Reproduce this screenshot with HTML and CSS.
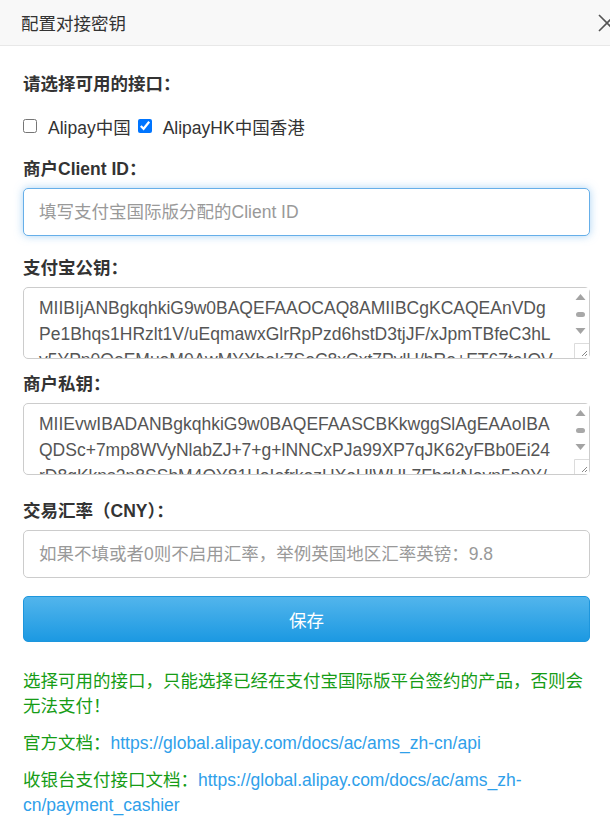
FILE: index.html
```html
<!DOCTYPE html>
<html lang="zh-CN">
<head>
  <meta charset="UTF-8">
  <title>配置对接密钥</title>
  <link rel="stylesheet" href="styles.css">
</head>
<body>

<div class="modal-header">
  <span class="modal-title">配置对接密钥</span>
  <button class="close-btn" aria-label="关闭">
    <svg width="18" height="18" viewBox="0 0 18 18"><path d="M1 1L17 17M17 1L1 17" stroke="#555" stroke-width="1.6" fill="none"/></svg>
  </button>
</div>

<div class="modal-body">
  <div class="group">
    <div class="label">请选择可用的接口：</div>
    <div class="check-row">
      <label class="check"><input type="checkbox">Alipay中国</label>
      <label class="check"><input type="checkbox" checked>AlipayHK中国香港</label>
    </div>
  </div>

  <div class="group">
    <div class="label">商户Client ID：</div>
    <input class="field focus" type="text" placeholder="填写支付宝国际版分配的Client ID">
  </div>

  <div class="group">
    <div class="label">支付宝公钥：</div>
    <div class="area-wrap">
      <textarea class="field area">MIIBIjANBgkqhkiG9w0BAQEFAAOCAQ8AMIIBCgKCAQEAnVDg
Pe1Bhqs1HRzlt1V/uEqmawxGlrRpPzd6hstD3tjJF/xJpmTBfeC3hL
v5YPn0QoEMuoM0AwMYXbek7SoC8xCxt7PvlH/hRo+ET67taIOV
k2Ws9rQ1pLmN4yTz8Fa3dHj6Ucb0XqVeR5gKoPi7sWnB2lAt
Yh9CmE4rZx1GvQ8uJd3NfTo6Kw5bMsLp0aRyH2iXe7gUcD4q
nV1jFz8tSk3OaW6mBq9PhY2xLr5CeGdT0uIv7oN4sEa1KbQw
3ZfRpX8yMcJ2UhD6tLg9VnAo5eWq1sBk4HiT7rYjCxP0mNdI
QIDAQAB</textarea>
      <div class="scrollbar">
        <svg class="arrow" width="17" height="18" viewBox="0 0 17 18"><path d="M3.5 12h10L8.5 6z" fill="#a3a3a3"/></svg>
        <div class="track"><span class="thumb"></span></div>
        <svg class="arrow" width="17" height="18" viewBox="0 0 17 18"><path d="M3.5 6h10L8.5 12z" fill="#a3a3a3"/></svg>
      </div>
    </div>
  </div>

  <div class="group">
    <div class="label">商户私钥：</div>
    <div class="area-wrap">
      <textarea class="field area">MIIEvwIBADANBgkqhkiG9w0BAQEFAASCBKkwggSlAgEAAoIBA
QDSc+7mp8WVyNlabZJ+7+g+lNNCxPJa99XP7qJK62yFBb0Ei24
rD8gKkns2n8SShM4QY81UoIofrkezHXeUlWUL7FbgkNevn5p0Y/
a3Lq7Vt0HcWm9Xe2Ko5sNbRj8Pz1GyTf4UiDwAh6ElMq3CnS
x7BrJ0vKt2OaYd5ZpQ9hWfL1mEsI8gNcT4uRyV6bXo3jDkA2
Gq5Ue8sHn1tFw0RmKz7vY4bLc9PiJ2oXa6dEhT3gMrNyS1Wk
u0CfZ8lQpV5eOxB2Ij7DtmR4sKn9YaHw1gU6cXo3vLbE0rNz
t5WnY0rQa4GzLx7PeB1sVm9KhI3uDcJ2oFy6Tg8NwEl0qRbA</textarea>
      <div class="scrollbar">
        <svg class="arrow" width="17" height="18" viewBox="0 0 17 18"><path d="M3.5 12h10L8.5 6z" fill="#a3a3a3"/></svg>
        <div class="track"><span class="thumb"></span></div>
        <svg class="arrow" width="17" height="18" viewBox="0 0 17 18"><path d="M3.5 6h10L8.5 12z" fill="#a3a3a3"/></svg>
      </div>
    </div>
  </div>

  <div class="group rate">
    <div class="label">交易汇率（CNY）：</div>
    <input class="field" type="text" placeholder="如果不填或者0则不启用汇率，举例英国地区汇率英镑：9.8">
  </div>

  <button class="save-btn">保存</button>

  <div class="notes">
    <p class="tip">选择可用的接口，只能选择已经在支付宝国际版平台签约的产品，否则会无法支付！</p>
    <p class="tip">官方文档：<a href="#">https://global.alipay.com/docs/ac/ams_zh-cn/api</a></p>
    <p class="tip">收银台支付接口文档：<a href="#">https://global.alipay.com/docs/ac/ams_zh-cn/payment_cashier</a></p>
  </div>
</div>

</body>
</html>
```

FILE: styles.css
```css
* {
  box-sizing: border-box;
}

body {
  margin: 0;
  font-family: "Liberation Sans", "Noto Sans CJK SC", sans-serif;
  font-size: 17.5px;
  color: #333;
  background: #fff;
  overflow: hidden;
}

.modal-header {
  display: flex;
  align-items: center;
  justify-content: space-between;
  height: 46px;
  padding: 0 0 0 21px;
  background: #f8f8f8;
  border-bottom: 1px solid #e8e8e8;
}

.modal-title {
  font-size: 17.5px;
  color: #333;
}

.close-btn {
  background: none;
  border: none;
  padding: 0;
  margin-right: -6px;
  width: 18px;
  height: 18px;
  display: flex;
}

.modal-body {
  padding: 26px 20px 0 23px;
}

.group {
  margin-bottom: 20px;
}

.label {
  font-weight: bold;
  line-height: 24px;
  margin-bottom: 7px;
  color: #333;
}

.check-row {
  display: flex;
  align-items: center;
  height: 24px;
  margin-top: 18px;
  margin-bottom: -1px;
}

.check {
  display: flex;
  align-items: center;
  margin-right: 7px;
  color: #333;
}

.check input {
  width: 14px;
  height: 14px;
  margin: 0 11px 0 0;
}

.field {
  display: block;
  width: 100%;
  height: 48px;
  padding: 0 15px;
  font-family: inherit;
  font-size: 17.5px;
  color: #555;
  border: 1px solid #ccc;
  border-radius: 5px;
  outline: none;
}

.field::placeholder {
  color: #999;
}

.field.focus {
  border-color: #66afe9;
  box-shadow: 0 0 8px rgba(102, 175, 233, 0.55);
}

.area-wrap {
  position: relative;
}

.area {
  height: 72px;
  padding: 7px 34px 7px 15px;
  line-height: 26px;
  resize: vertical;
  overflow: hidden;
  white-space: pre;
}

/* drawn scrollbar, sits over the textarea's right edge */
.scrollbar {
  position: absolute;
  top: 1px;
  right: 1px;
  width: 17px;
  height: 52px;
  display: flex;
  flex-direction: column;
  background: #fff;
}

.arrow {
  display: block;
  flex: none;
}

.track {
  flex: 1;
  display: flex;
  align-items: center;
  justify-content: center;
}

.thumb {
  width: 9px;
  height: 5px;
  border-radius: 3px;
  background: #a8a8a8;
}

.area::-webkit-resizer {
  background: #fff url("data:image/svg+xml;utf8,<svg xmlns='http://www.w3.org/2000/svg' width='17' height='17'><path d='M0.5 17V0.5H17' stroke='%23dcdcdc' fill='none'/><path d='M13 8L8 13M13 11L11 13' stroke='%23888' fill='none'/></svg>") no-repeat;
}

.group:nth-child(3) {
  margin-bottom: 13px;
}

.group:nth-child(4) {
  margin-bottom: 24px;
}

.group.rate {
  margin-bottom: 18px;
}

.save-btn {
  display: block;
  width: 100%;
  height: 46px;
  font-family: inherit;
  font-size: 17.5px;
  color: #fff;
  background: linear-gradient(#52b5ec, #1c99e2);
  border: 1px solid #1d96dd;
  border-radius: 5px;
  cursor: pointer;
}

.notes {
  margin-top: 27px;
}

.tip {
  margin: 0 0 12px;
  line-height: 25px;
  color: #169c16;
}

.tip a {
  color: #2fa0ea;
  text-decoration: none;
}
```
